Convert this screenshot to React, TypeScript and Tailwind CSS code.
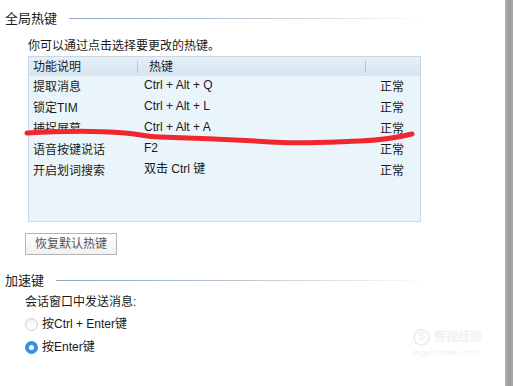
const rows = [
  { name: '提取消息', key: 'Ctrl + Alt + Q', state: '正常' },
  { name: '锁定TIM', key: 'Ctrl + Alt + L', state: '正常' },
  { name: '捕捉屏幕', key: 'Ctrl + Alt + A', state: '正常' },
  { name: '语音按键说话', key: 'F2', state: '正常' },
  { name: '开启划词搜索', key: '双击 Ctrl 键', state: '正常' },
]

function SectionTitle({ text, gap }: { text: string; gap: string }) {
  return (
    <div className="flex items-center w-[425px] h-[18px]">
      <span className="text-[13px] text-[#1a1a1a] leading-none">{text}</span>
      <div className={`${gap} flex-1 h-px bg-gradient-to-r from-[#8ea7bf] via-[#b9c8d5] to-transparent`} />
    </div>
  )
}

export default function App() {
  return (
    <div
      className="flex w-[513px] h-[386px] bg-white overflow-hidden"
      style={{ fontFamily: '"Liberation Sans", "Noto Sans CJK SC", sans-serif' }}
    >
      <div className="relative flex-1 flex flex-col pl-[5px] pt-[9px]">
        <SectionTitle text="全局热键" gap="ml-[12px]" />

        <div className="pl-[23px] pt-[12px]">
          <p className="text-[12px] leading-[14px] text-[#1a1a1a]">你可以通过点击选择要更改的热键。</p>

          <div className="mt-[3px] w-[393px] h-[166px] border border-[#c9d8e3] bg-[#eaf4fb] text-[12px] text-[#1a1a1a]">
            <div className="flex h-[19px] items-center bg-gradient-to-b from-[#e6eff7] to-[#d6e5f1]">
              <div className="w-[108px] pl-[4px]">功能说明</div>
              <div className="w-px h-[12px] bg-[#b7c6d3]" />
              <div className="w-[227px] pl-[11px]">热键</div>
              <div className="w-px h-[12px] bg-[#b7c6d3]" />
            </div>
            {rows.map((r) => (
              <div key={r.name} className="flex h-[21px] items-center">
                <div className="w-[108px] pl-[4px]">{r.name}</div>
                <div className="w-[228px] pl-[7px] -mt-[3px]">{r.key}</div>
                <div className="pl-[15px]">{r.state}</div>
              </div>
            ))}
          </div>
        </div>

        <div className="pl-[20px] pt-[9px]">
          <button className="w-[92px] h-[22px] border border-[#b4b4b4] bg-gradient-to-b from-white to-[#f1f1f1] text-[12px] text-[#555]">
            恢复默认热键
          </button>
        </div>

        <div className="pt-[16px]">
          <SectionTitle text="加速键" gap="ml-[12px]" />
        </div>

        <div className="pl-[20px] pt-[6px] text-[12px] text-[#1a1a1a]">
          <p className="leading-[14px]">会话窗口中发送消息:</p>
          <label className="flex items-center gap-[4px] mt-[7px] h-[16px]">
            <span className="w-[13px] h-[13px] rounded-full border border-[#cfcfcf] bg-gradient-to-b from-[#f4f4f4] to-white" />
            <span>按Ctrl + Enter键</span>
          </label>
          <label className="flex items-center gap-[4px] mt-[7px] h-[16px]">
            <span className="w-[13px] h-[13px] rounded-full border-[4px] border-[#3d8fe6] bg-white" />
            <span>按Enter键</span>
          </label>
        </div>

        <div className="absolute left-[413px] top-[328px] flex flex-col items-start whitespace-nowrap text-[#f0f0f0]">
          <div className="flex items-center gap-[4px]">
            <span className="w-[17px] h-[17px] rounded-full border-2 border-[#eeeeee] text-[10px] leading-none flex items-center justify-center font-bold">S</span>
            <span className="text-[12px] font-bold">懂视经验</span>
          </div>
          <span className="text-[8px] mt-[1px]">jingyan.baidu.com</span>
        </div>

        <svg className="absolute left-0 top-0 pointer-events-none" width="505" height="386" viewBox="0 0 505 386">
          <path
            d="M27 133 C60 131 100 131 125 133 C140 134 145 137 160 137 C200 138 240 140 270 142 C300 144 330 142 360 141 C385 140 400 137 412 134"
            fill="none"
            stroke="#f0282d"
            strokeWidth="5"
            strokeLinecap="round"
          />
        </svg>
      </div>
      <div className="w-[8px] h-full bg-gradient-to-r from-[#b3b3b3] via-[#9d9d9d] to-[#a8a8a8]" />
    </div>
  )
}
